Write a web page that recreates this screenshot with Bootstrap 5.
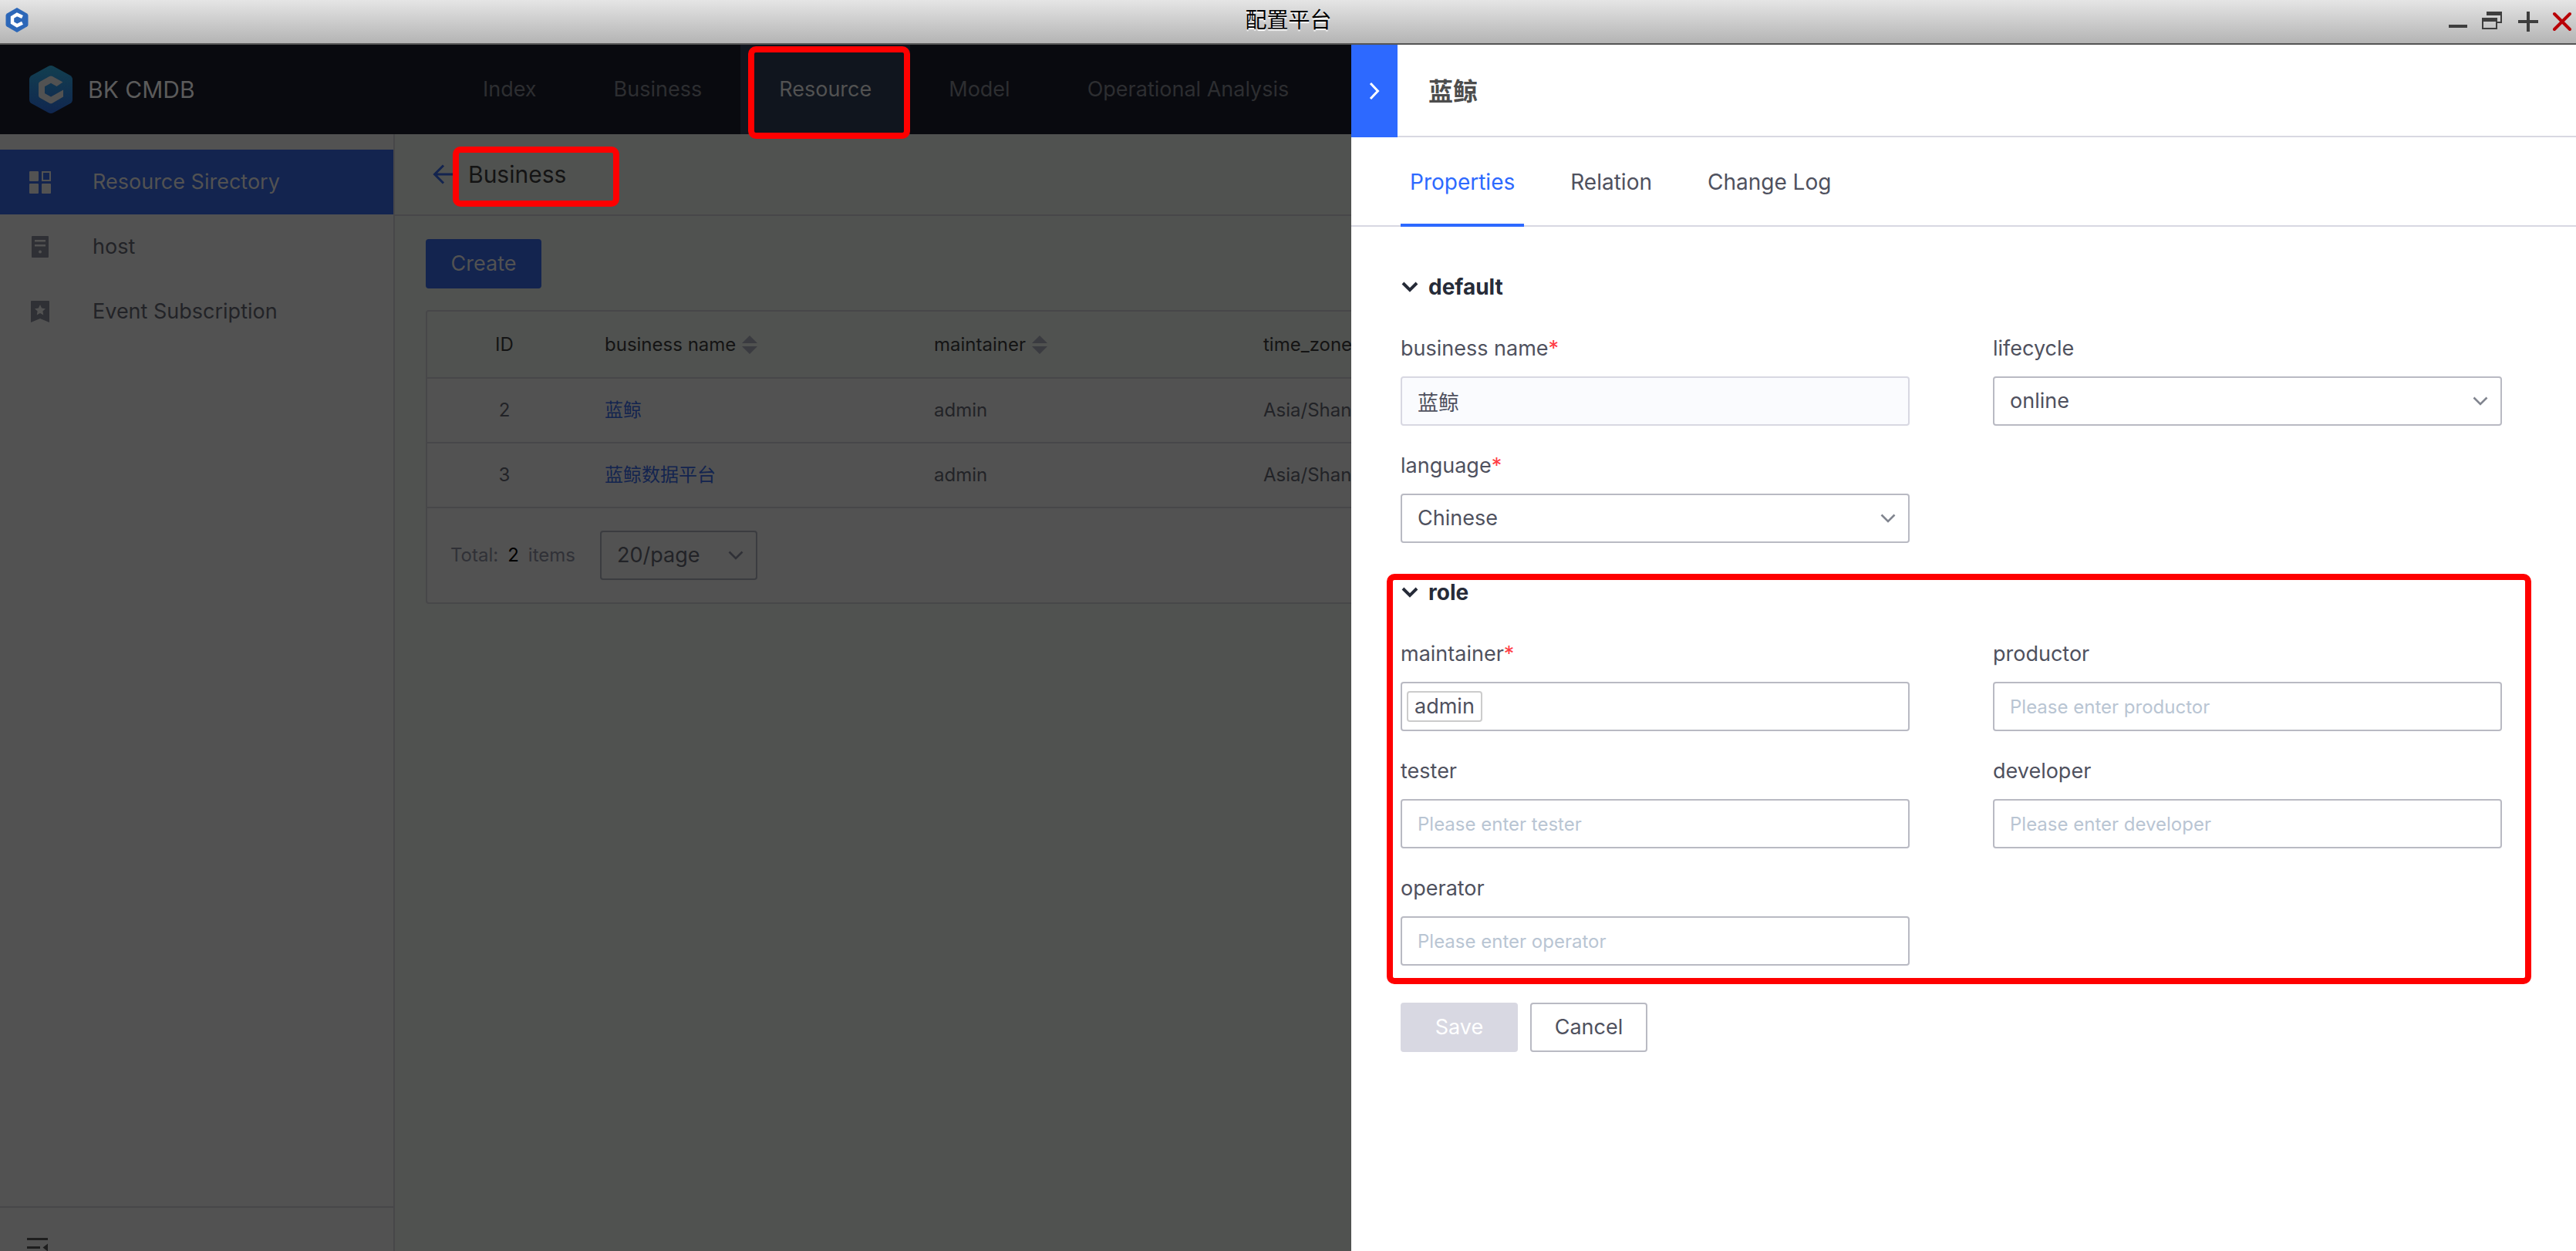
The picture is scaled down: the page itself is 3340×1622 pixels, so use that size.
<!DOCTYPE html>
<html lang="en">
<head>
<meta charset="utf-8">
<meta name="viewport" content="width=device-width, initial-scale=1">
<title>配置平台</title>
<link href="https://cdn.jsdelivr.net/npm/bootstrap@5.3.0/dist/css/bootstrap.min.css" rel="stylesheet">
<script src="https://cdn.jsdelivr.net/npm/bootstrap@5.3.0/dist/js/bootstrap.bundle.min.js" defer></script>
<style>
  :root { --accent: #2d69ff; --dim-side: #525252; --dim-main: #505250; --dim-line: #474749; --mark-red: #ff0000; }
  body { font-family: Inter, "Noto Sans CJK SC", sans-serif; font-size: 27px; line-height: 40px; color: #4f515e; background: #fff; }
  svg { display: block; flex: none; }

  /* window title bar */
  .win-bar { height: 58px; border-bottom: 2px solid #555; background: linear-gradient(#e5e5e5, #b4b4b4); padding: 0 6px 0 7px; color: #000; }
  .win-side { flex: 1 1 0; gap: 19px; }
  .win-title { font-size: 28px; text-shadow: 0 2px 1px #fff; }
  .plain-btn { border: 0; padding: 0; background: none; color: inherit; }

  /* dimmed application behind the side panel */
  .app-head { height: 116px; background: #090a0f; padding-left: 38px; }
  .brand { width: 538px; gap: 20px; font-size: 30px; color: #5b5b5b; }
  .top-link { display: flex; align-items: center; padding: 0 50px; color: #2d2e31; text-decoration: none; white-space: nowrap; position: relative; }
  .top-link.active { background: #10151e; color: #525252; }
  .marked::after { content: ""; position: absolute; border: 8px solid var(--mark-red); border-radius: 10px; z-index: 5; pointer-events: none; }
  .top-link.marked::after { inset: 2px 0 -6px 10px; }

  .side-nav { width: 512px; background: var(--dim-side); border-right: 2px solid var(--dim-line); }
  .side-link { display: flex; align-items: center; height: 84px; padding-left: 36px; gap: 52px; color: #222327; text-decoration: none; }
  .side-link svg { color: #2f3035; }
  .side-link.active { background: #13244f; color: #525252; }
  .side-link.active svg { color: #525252; }
  .side-foot { height: 58px; border-top: 2px solid var(--dim-line); padding: 37px 0 0 35px; overflow: hidden; }

  .main-area { background: var(--dim-main); min-width: 0; }
  .crumb { height: 106px; border-bottom: 2px solid var(--dim-line); padding-left: 49px; gap: 19px; font-size: 30px; color: #141414; }
  .crumb .marked { position: relative; }
  .crumb .marked::after { inset: -16px auto auto -20px; width: 216px; height: 78px; }
  .list-area { padding: 30px 40px; }
  .btn-create { --bs-btn-bg: #13244f; --bs-btn-color: #525252; --bs-btn-border-color: #13244f; width: 150px; }
  .btn-box { height: 64px; font-size: 27px; line-height: 40px; padding: 0; border-width: 2px; border-radius: 4px; }
  .grid-box { border: 2px solid var(--dim-line); border-radius: 4px; background: var(--dim-side); overflow: hidden; margin-top: 28px; }
  .grid-table { table-layout: fixed; font-size: 24px; line-height: 32px; --bs-table-bg: transparent; --bs-table-color: #222327; margin: 0; }
  .grid-table th, .grid-table td { padding: 0 30px; height: 84px; vertical-align: middle; border-bottom: 2px solid var(--dim-line); white-space: nowrap; }
  .grid-table th { background: var(--dim-main); color: #141414; font-weight: 400; height: 86px; }
  .grid-table a { color: #13244f; text-decoration: none; }
  .col-id { width: 200px; }
  .col-text { width: 427px; }
  .grid-foot { height: 122px; padding-left: 30px; font-size: 24px; color: #303137; }

  /* form controls */
  .ctl { height: 64px; border: 2px solid #b9bac3; border-radius: 4px; padding: 0 20px; font-size: 27px; line-height: 40px; color: #4f515e; background-color: #fff; }
  .ctl:placeholder-shown { font-size: 24px; }
  .ctl::placeholder { color: #b9c5d3; opacity: 1; }
  .ctl:disabled { background-color: #fafbfe; border-color: #d8d8e2; opacity: 1; }
  select.ctl { background-image: url("data:image/svg+xml,%3Csvg xmlns='http://www.w3.org/2000/svg' viewBox='0 0 20 12'%3E%3Cpath d='M1.5 1.5 10 10l8.500-8.500' fill='none' stroke='%2381858f' stroke-width='2.600'/%3E%3C/svg%3E"); background-size: 20px 12px; background-position: right 16px center; }
  select.ctl-page { width: 204px; margin-left: 32px; color: #222327; background-color: transparent; border-color: #3b3c40; background-image: url("data:image/svg+xml,%3Csvg xmlns='http://www.w3.org/2000/svg' viewBox='0 0 20 12'%3E%3Cpath d='M1.500 1.500 10 10l8.500-8.500' fill='none' stroke='%23303137' stroke-width='2.600'/%3E%3C/svg%3E"); }
  .tag-box { padding: 0 6px; gap: 8px; }
  .tag-item { border: 2px solid #ccc; border-radius: 4px; line-height: 36px; padding: 0 8px; }
  .tag-box input { border: 0; outline: 0; min-width: 0; }

  /* side panel */
  .slider { position: absolute; top: 0; right: 0; bottom: 0; width: 1588px; max-width: 100%; background: #fff; z-index: 10; }
  .slider-head { height: 120px; }
  .slider-close { width: 60px; background: var(--accent); color: #fff; }
  .slider-title { font-size: 32px; font-weight: 700; color: #4d4d4d; border-bottom: 2px solid #d8d8e2; padding: 4px 0 0 40px; margin: 0; }
  .slider-tabs { height: 116px; padding-left: 64px; gap: 48px; border-bottom: 2px solid #d8d8e2; }
  .slider-tabs .tab-item { border-bottom: 4px solid transparent; padding: 4px 12px 0; margin-bottom: -2px; font-size: 28px; color: #4f515e; }
  .slider-tabs .tab-item.active { color: var(--accent); border-color: var(--accent); }
  .slider-body { padding: 58px 96px 0 64px; }
  .group-title { font-size: 28px; line-height: 40px; font-weight: 700; color: #262b38; gap: 13px; margin: 0 0 40px; padding-left: 1px; }
  .group-block { position: relative; margin-bottom: 44px; }
  .group-block.marked { margin-bottom: 48px; }
  .group-block.marked::after { inset: -4px -38px -24px -18px; }
  .fields { display: grid; grid-template-columns: 1fr 1fr; gap: 32px 108px; }
  .fields label { display: block; margin-bottom: 16px; }
  .req { color: #ff3b45; }
  .act-btn { width: 152px; }
  .btn-save { --bs-btn-disabled-bg: #d8d8e2; --bs-btn-disabled-border-color: #d8d8e2; --bs-btn-disabled-color: #fff; --bs-btn-disabled-opacity: 1; }
  .btn-cancel { --bs-btn-color: #4f515e; --bs-btn-border-color: #b9bac3; --bs-btn-bg: #fff; }
</style>
</head>
<body class="vh-100 d-flex flex-column overflow-hidden">

<header class="win-bar d-flex align-items-center">
  <div class="win-side d-flex pb-1">
    <svg width="30" height="34" viewBox="0 0 30 34"><path d="M15 1 28 8.500Q29.500 9.500 29.500 11V23Q29.500 24.500 28 25.500L15 33 2 25.500Q.5 24.500.5 23V11Q.5 9.500 2 8.500Z" fill="#2c67b8"/><path d="M22 13 15 9.800 9 13.400V20.600L15 24.200 22 20.800" fill="none" stroke="#fff" stroke-width="4.400"/></svg>
  </div>
  <div class="win-title pb-1">配置平台</div>
  <div class="win-side d-flex justify-content-end align-items-center">
    <button class="plain-btn" aria-label="Minimize"><svg width="24" height="26" viewBox="0 0 24 26"><path d="M0 17H24V21H0Z" fill="#3e3e3e"/></svg></button>
    <button class="plain-btn" aria-label="Restore"><svg width="28" height="26" viewBox="0 0 28 26"><path d="M7 5V1H25V14H20" fill="none" stroke="#3e3e3e" stroke-width="2"/><path d="M6 0H26V5H6Z" fill="#3e3e3e"/><path d="M1 9H19V22H1Z" fill="none" stroke="#3e3e3e" stroke-width="2"/><path d="M0 8H20V13H0Z" fill="#3e3e3e"/></svg></button>
    <button class="plain-btn" aria-label="Maximize"><svg width="26" height="26" viewBox="0 0 26 26"><path d="M13 0V26M0 13H26" stroke="#3e3e3e" stroke-width="4"/></svg></button>
    <button class="plain-btn" aria-label="Close"><svg width="24" height="26" viewBox="0 0 24 26"><path d="M2 3 22 23M22 3 2 23" stroke="#b90007" stroke-width="4" stroke-linecap="round"/></svg></button>
  </div>
</header>

<div class="flex-grow-1 d-flex flex-column position-relative overflow-hidden">

  <div class="app-head d-flex flex-shrink-0">
    <div class="brand d-flex align-items-center flex-shrink-0">
      <svg width="56" height="62" viewBox="0 0 56 62"><defs><linearGradient id="lg" x1="0" y1="0" x2="0" y2="1"><stop offset="0" stop-color="#123f50"/><stop offset="1" stop-color="#10264f"/></linearGradient></defs><path d="M24.500.9Q28-.9 31.500.9L52.500 12.500Q56 14.500 56 18V44Q56 47.500 52.500 49.500L31.500 61.100Q28 62.900 24.500 61.100L3.500 49.500Q0 47.500 0 44V18Q0 14.500 3.500 12.500Z" fill="url(#lg)"/><path d="M26 14Q28 13 30 14L43.500 21.500 35.500 27 28 22.800 20 27.200V36L28 40.500 44 31.500V40.500L30 48.700Q28 49.700 26 48.700L14 42Q12 41 12 39V23.500Q12 21.800 14 20.700Z" fill="#525252"/></svg>
      <span>BK CMDB</span>
    </div>
    <nav class="d-flex">
      <a class="top-link" href="#">Index</a>
      <a class="top-link" href="#">Business</a>
      <a class="top-link active marked" href="#">Resource</a>
      <a class="top-link" href="#">Model</a>
      <a class="top-link" href="#">Operational Analysis</a>
    </nav>
  </div>

  <div class="flex-grow-1 d-flex">
    <aside class="side-nav d-flex flex-column flex-shrink-0">
      <nav class="flex-grow-1 pt-3 mt-1">
        <a class="side-link active" href="#"><svg width="32" height="32" viewBox="0 0 32 32" fill="currentColor"><rect x="2" y="2" width="12" height="13" rx="1"/><rect x="2" y="18" width="12" height="13" rx="1"/><rect x="18" y="18" width="12" height="13" rx="1"/><rect x="19" y="3" width="10" height="11" fill="none" stroke="currentColor" stroke-width="2"/></svg>Resource Sirectory</a>
        <a class="side-link" href="#"><svg width="32" height="32" viewBox="0 0 32 32" fill="currentColor"><path fill-rule="evenodd" d="M6 2H26Q27 2 27 3V29Q27 30 26 30H6Q5 30 5 29V3Q5 2 6 2ZM9 7V9.500H23V7ZM9 13V15.500H23V13ZM16 20.500A2 2 0 1 0 16 24.500A2 2 0 1 0 16 20.500Z"/></svg>host</a>
        <a class="side-link" href="#"><svg width="32" height="32" viewBox="0 0 32 32" fill="currentColor"><path fill-rule="evenodd" d="M5 2H27Q28 2 28 3V30L16 25 4 30V3Q4 2 5 2ZM16 7 18.100 11.600 23 12.200 19.400 15.600 20.300 20.500 16 18.100 11.700 20.500 12.600 15.600 9 12.200 13.900 11.600Z"/></svg>Event Subscription</a>
      </nav>
      <div class="side-foot">
        <button class="plain-btn" aria-label="Collapse menu"><svg width="27" height="28" viewBox="0 0 27 28" fill="#1e1e1e"><path d="M0 1H27V4H0ZM0 12H17V15H0ZM27 8.500V18.500L20.500 13.500ZM0 23H27V26H0Z"/></svg></button>
      </div>
    </aside>

    <main class="main-area flex-grow-1">
      <div class="crumb d-flex align-items-center">
        <svg width="27" height="26" viewBox="0 0 27 26"><path d="M14 1.500 2.500 13 14 24.500M2.500 13H27" fill="none" stroke="#13244f" stroke-width="3"/></svg>
        <span class="marked">Business</span>
      </div>
      <div class="list-area">
        <button class="btn btn-box btn-create d-block">Create</button>
        <div class="grid-box">
          <table class="table grid-table">
            <colgroup><col class="col-id"><col class="col-text"><col class="col-text"><col></colgroup>
            <thead><tr>
              <th class="text-center">ID</th>
              <th><span class="d-flex align-items-center gap-2">business name <svg width="20" height="24" viewBox="0 0 20 24" fill="#3a3b40"><path d="M10 0 20 10H0ZM10 24 20 14H0Z"/></svg></span></th>
              <th><span class="d-flex align-items-center gap-2">maintainer <svg width="20" height="24" viewBox="0 0 20 24" fill="#3a3b40"><path d="M10 0 20 10H0ZM10 24 20 14H0Z"/></svg></span></th>
              <th>time_zone</th>
            </tr></thead>
            <tbody>
              <tr><td class="text-center">2</td><td><a href="#">蓝鲸</a></td><td>admin</td><td>Asia/Shanghai</td></tr>
              <tr><td class="text-center">3</td><td><a href="#">蓝鲸数据平台</a></td><td>admin</td><td>Asia/Shanghai</td></tr>
            </tbody>
          </table>
          <div class="grid-foot d-flex align-items-center">
            <label for="page-size" class="d-flex"><span>Total:</span><span class="px-2 mx-1 text-black">2</span><span>items</span></label>
            <select id="page-size" class="form-select ctl ctl-page"><option>20/page</option></select>
          </div>
        </div>
      </div>
    </main>
  </div>

  <section class="slider">
    <div class="slider-head d-flex">
      <button class="plain-btn slider-close d-flex align-items-center justify-content-center" aria-label="Close panel"><svg width="14" height="24" viewBox="0 0 14 24"><path d="M2 2 11.500 12 2 22" fill="none" stroke="#fff" stroke-width="3"/></svg></button>
      <h1 class="slider-title flex-grow-1 d-flex align-items-center">蓝鲸</h1>
    </div>
    <div class="slider-tabs d-flex" role="tablist">
      <button class="plain-btn tab-item active" role="tab">Properties</button>
      <button class="plain-btn tab-item" role="tab">Relation</button>
      <button class="plain-btn tab-item" role="tab">Change Log</button>
    </div>
    <form class="slider-body">
      <div class="group-block">
        <h2 class="group-title d-flex align-items-center"><svg width="22" height="14" viewBox="0 0 22 14"><path d="M2 2 11 11 20 2" fill="none" stroke="#262b38" stroke-width="4"/></svg>default</h2>
        <div class="fields">
          <div><label for="f-name">business name<span class="req">*</span></label><input id="f-name" class="form-control ctl" value="蓝鲸" disabled></div>
          <div><label for="f-life">lifecycle</label><select id="f-life" class="form-select ctl"><option>online</option></select></div>
          <div><label for="f-lang">language<span class="req">*</span></label><select id="f-lang" class="form-select ctl"><option>Chinese</option></select></div>
        </div>
      </div>
      <div class="group-block marked">
        <h2 class="group-title d-flex align-items-center"><svg width="22" height="14" viewBox="0 0 22 14"><path d="M2 2 11 11 20 2" fill="none" stroke="#262b38" stroke-width="4"/></svg>role</h2>
        <div class="fields">
          <div><label for="f-main">maintainer<span class="req">*</span></label><div class="ctl tag-box d-flex align-items-center"><span class="tag-item">admin</span><input id="f-main" class="flex-grow-1"></div></div>
          <div><label for="f-prod">productor</label><input id="f-prod" class="form-control ctl" placeholder="Please enter productor"></div>
          <div><label for="f-test">tester</label><input id="f-test" class="form-control ctl" placeholder="Please enter tester"></div>
          <div><label for="f-dev">developer</label><input id="f-dev" class="form-control ctl" placeholder="Please enter developer"></div>
          <div><label for="f-oper">operator</label><input id="f-oper" class="form-control ctl" placeholder="Please enter operator"></div>
        </div>
      </div>
      <div class="d-flex gap-3">
        <button type="button" class="btn btn-box act-btn btn-save" disabled>Save</button>
        <button type="button" class="btn btn-box act-btn btn-cancel">Cancel</button>
      </div>
    </form>
  </section>
</div>
</body>
</html>
